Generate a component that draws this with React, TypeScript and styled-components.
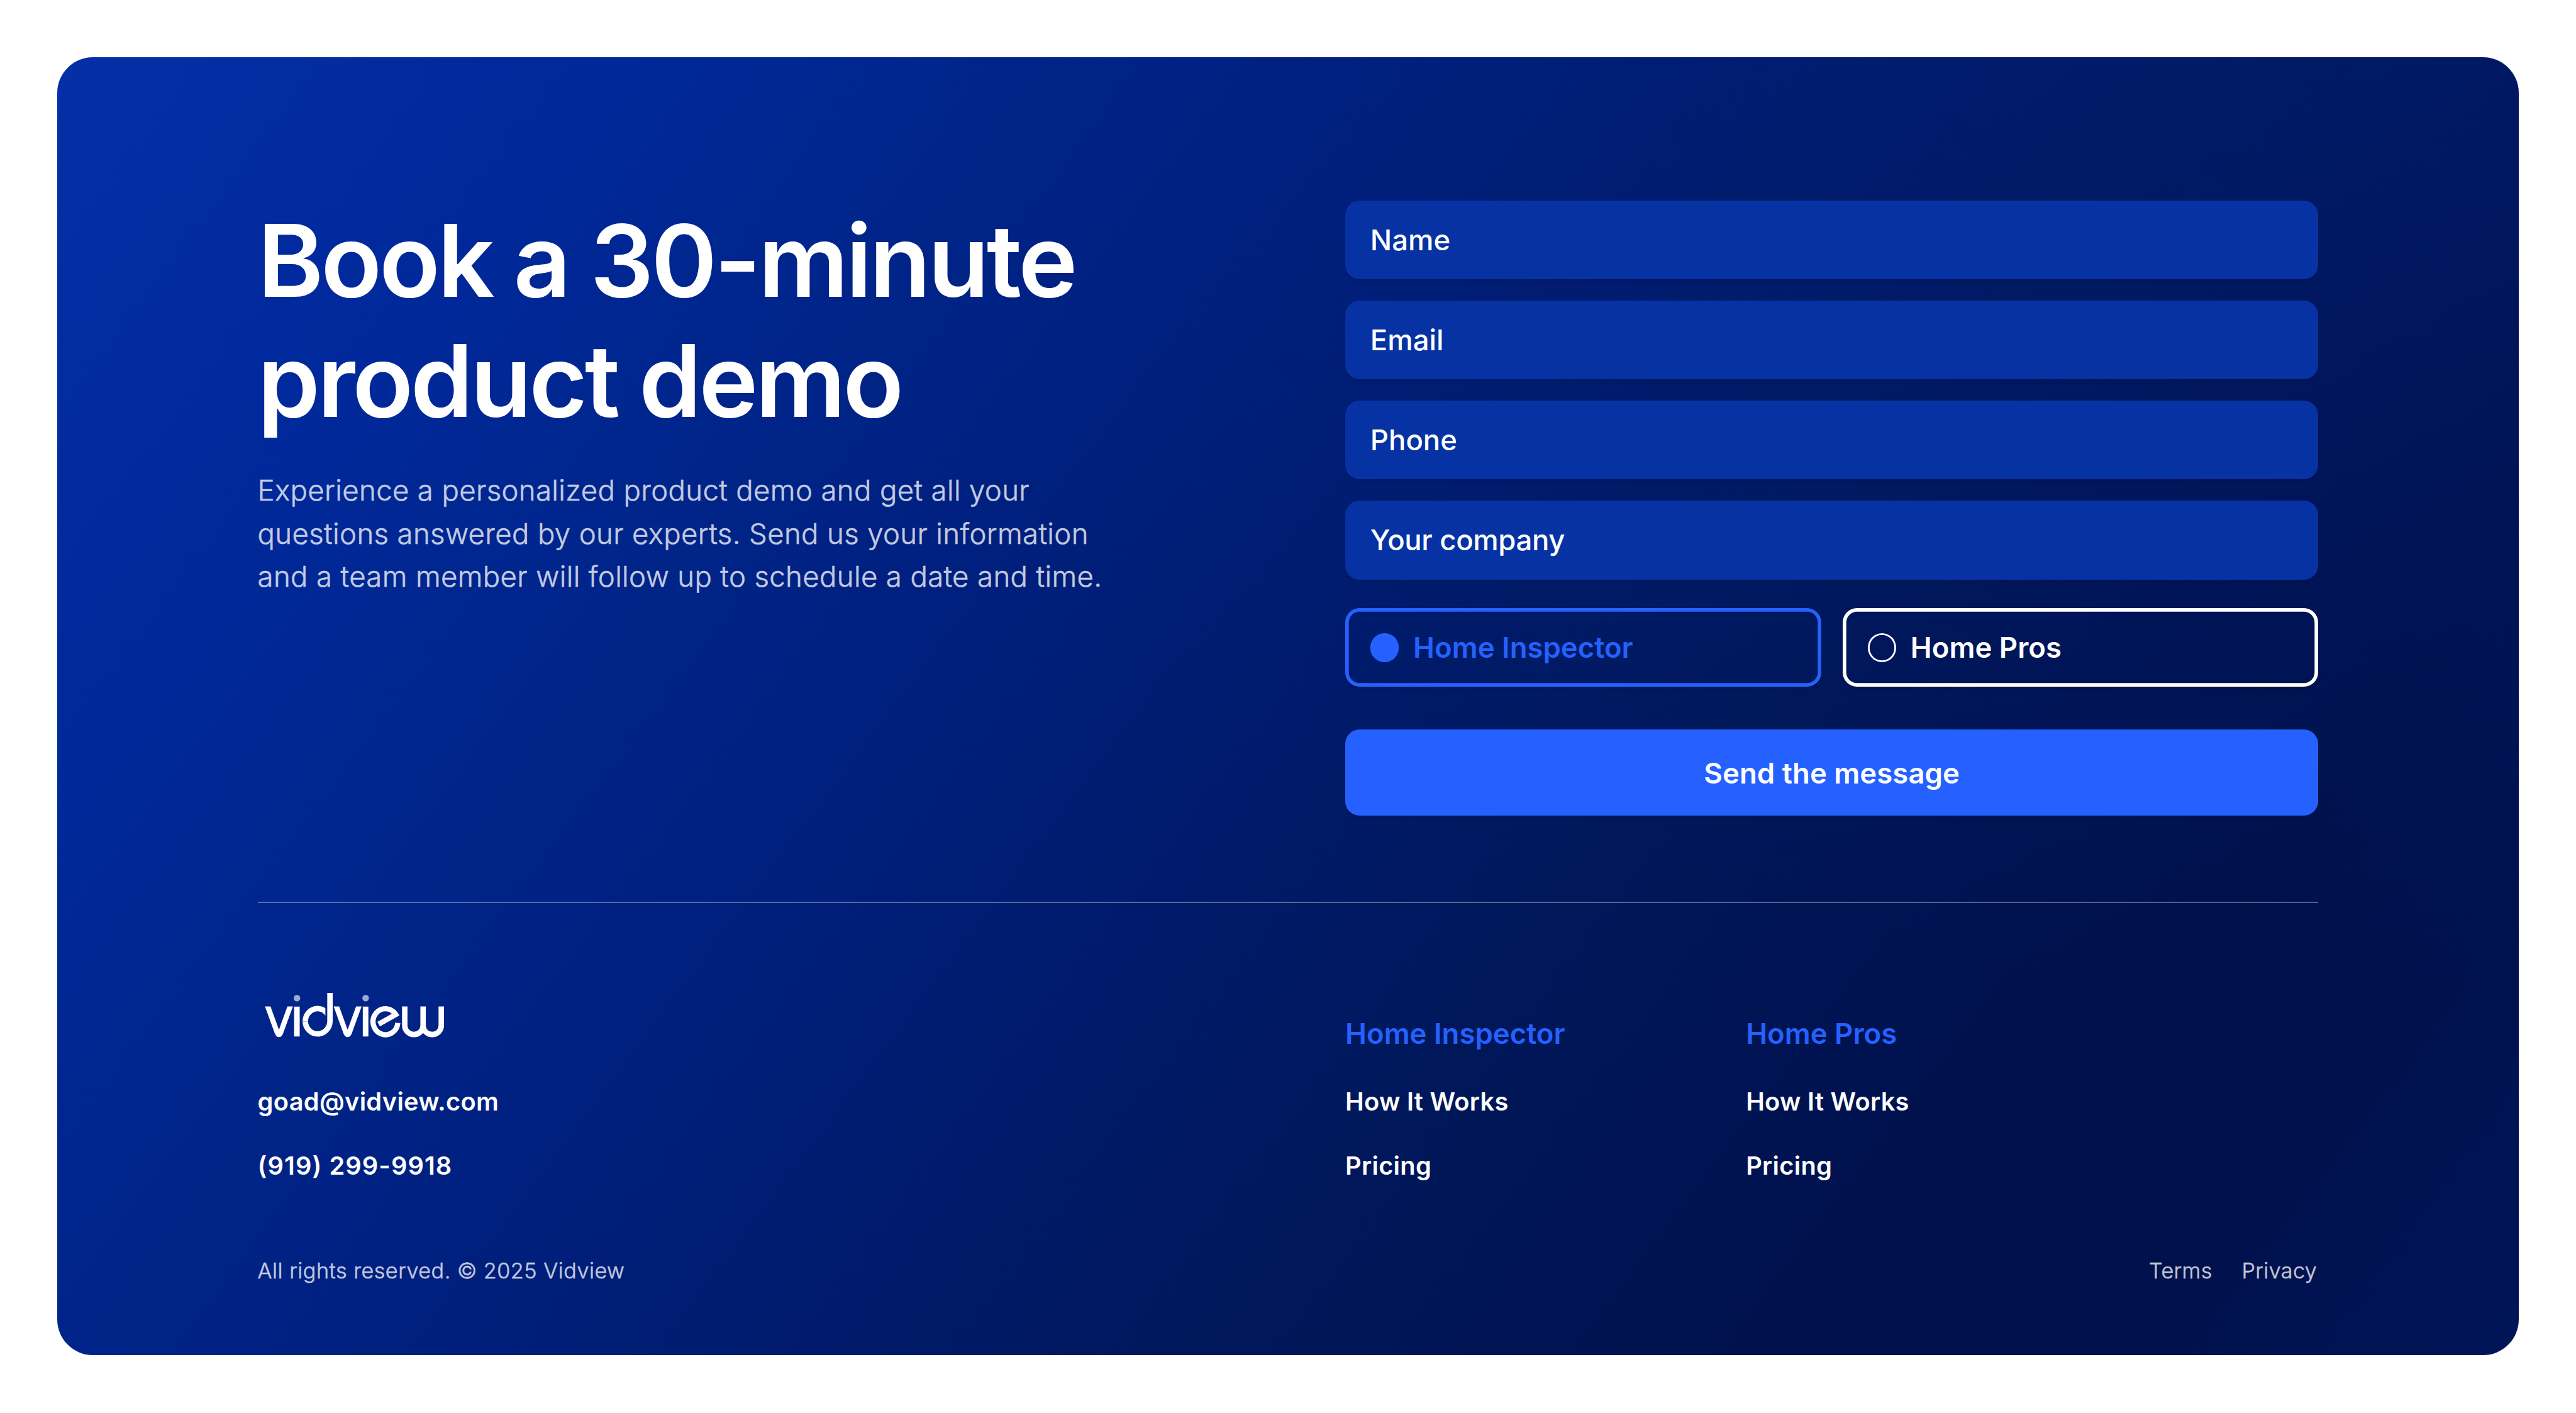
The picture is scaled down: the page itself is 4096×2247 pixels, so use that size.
import React, { useState } from "react";
import styled, { createGlobalStyle, css } from "styled-components";

const u = (n: number) => `${((n * 4096) / 1440).toFixed(3)}px`;

const color = {
  white: "#ffffff",
  line: "rgba(255, 255, 255, 0.33)",
  accent: "#2561ff",
  field: "#0632a4",
};

const GlobalStyle = createGlobalStyle`
  *, *::before, *::after { box-sizing: border-box; }
  html, body { margin: 0; background: #ffffff; }
  body { font-family: Inter, "Liberation Sans", sans-serif; color: ${color.white}; }
  h1, p, ul { margin: 0; padding: 0; }
  ul { list-style: none; }
  a { color: inherit; text-decoration: none; }
`;

const Page = styled.main`
  width: 4096px;
  height: 2247px;
  padding: ${u(32)};
  overflow: hidden;
`;

const Card = styled.section`
  display: flex;
  flex-direction: column;
  height: ${u(725.75)};
  padding: ${u(80)} ${u(112)} 0;
  border-radius: ${u(20)};
  background:
    radial-gradient(ellipse 68% 78% at 96% -5%, rgba(0, 34, 130, 0.38), rgba(0, 34, 130, 0) 100%),
    linear-gradient(
      127deg,
      #052fa6 0%,
      #00299c 14%,
      #002488 29%,
      #002080 37%,
      #001b6c 50%,
      #001759 63%,
      #001352 72%,
      #00104a 82%,
      #00114e 90%,
      #001557 100%
    );
`;

const Booking = styled.div`
  display: grid;
  grid-template-columns: ${u(608)} ${u(544)};
  height: ${u(392)};
`;

const Intro = styled.div`
  display: flex;
  flex-direction: column;
  gap: ${u(16)};
`;

const Title = styled.h1`
  font-size: ${u(56)};
  font-weight: 600;
  line-height: 1.2;
  letter-spacing: -0.0268em;
  word-spacing: -0.009em;
`;

// Secondary copy: a light face, slightly thickened, faded towards the background.
const softText = css`
  color: ${color.white};
  opacity: 0.76;
  font-weight: 300;
  -webkit-text-stroke: 0.5px ${color.white};
`;

const Lead = styled.p`
  ${softText}
  font-size: ${u(16)};
  line-height: ${u(24)};
  letter-spacing: 0.0082em;
  white-space: nowrap;
`;

const Form = styled.form`
  display: flex;
  flex-direction: column;
`;

const Fields = styled.div`
  display: grid;
  gap: ${u(12)};
`;

const drop = `0 ${u(1)} ${u(2)} rgba(0, 0, 0, 0.12)`;

const control = css`
  height: ${u(44)};
  border: 0;
  border-radius: ${u(8)};
  font-family: inherit;
  font-size: ${u(16)};
  line-height: ${u(24)};
  box-shadow: ${drop};
`;

const Field = styled.input<{ $tracking?: number }>`
  ${control}
  width: 100%;
  padding: 0 ${u(14)};
  outline: 0;
  background: ${color.field};
  color: ${color.white};
  font-weight: 500;
  letter-spacing: ${(p) => p.$tracking ?? 0}em;
  &::placeholder {
    color: ${color.white};
    opacity: 1;
  }
`;

const Choices = styled.div`
  display: grid;
  grid-template-columns: 1fr 1fr;
  gap: ${u(12)};
  margin: ${u(16)} 0 ${u(24)};
`;

const Choice = styled.button<{ $on: boolean }>`
  ${control}
  display: flex;
  align-items: center;
  gap: ${u(8)};
  padding: ${u(0.4)} ${u(14)} 0;
  box-shadow: inset 0 0 0 ${u(2)} currentColor, ${drop};
  background: none;
  color: ${(p) => (p.$on ? color.accent : color.white)};
  font-weight: 600;
`;

const Dot = styled.span<{ $on: boolean }>`
  width: ${u(16)};
  height: ${u(16)};
  border-radius: 50%;
  box-shadow: inset 0 0 0 ${u(1)} currentColor;
  background: ${(p) => (p.$on ? "currentColor" : "transparent")};
`;

const Submit = styled.button`
  ${control}
  height: ${u(48)};
  padding: ${u(0.7)} 0 0;
  background: ${color.accent};
  color: ${color.white};
  font-weight: 600;
  letter-spacing: 0.001em;
`;

const Rule = styled.hr`
  flex: none;
  width: 100%;
  height: ${u(1)};
  margin: 0;
  border: 0;
  background: ${color.line};
`;

const Footer = styled.footer`
  display: grid;
  grid-template-columns: ${u(608)} ${u(224)} auto;
  padding-top: ${u(50)};
`;

const Column = styled.div`
  display: flex;
  flex-direction: column;
`;

const Links = styled.ul`
  font-size: ${u(14)};
  font-weight: 600;
  line-height: ${u(36)};
  letter-spacing: 0.007em;
`;

const PhoneLink = styled.a`
  letter-spacing: 0.0265em;
`;

const LogoBox = styled.div`
  height: ${u(42.9)};
`;

const ColumnTitle = styled.div`
  height: ${u(42.9)};
  padding-top: ${u(10.9)};
  color: ${color.accent};
  font-size: ${u(16)};
  font-weight: 600;
  line-height: ${u(24)};
`;

const Legal = styled.div`
  ${softText}
  display: flex;
  justify-content: space-between;
  margin-top: ${u(31.6)};
  font-size: ${u(12)};
  line-height: ${u(18)};
`;

const Copyright = styled.span`
  letter-spacing: 0.0154em;
`;

const LegalLinks = styled.nav`
  display: flex;
  gap: ${u(16.4)};
  padding-right: ${u(0.8)};
  letter-spacing: 0.012em;
`;

const LogoSvg = styled.svg`
  display: block;
  width: ${u(104)};
  height: ${u(25)};
  overflow: visible;
`;

const Logo = () => (
  <LogoSvg viewBox="48 120 1248 300" fill="none" stroke="#fff" strokeWidth="36.5" role="img" aria-label="vidview">
    <defs>
      <clipPath id="belowTop"><rect x="80" y="211" width="720" height="220" /></clipPath>
      <clipPath id="bowlTop"><rect x="340" y="200" width="161" height="112.5" /></clipPath>
      <g id="wedge">
        <path d="M107.2 191 L178 386 Q189.5 413 201 386 L271.8 191" strokeWidth="34.8" />
        <path d="M310 211 V412.5" strokeWidth="37.5" />
      </g>
    </defs>
    <g clipPath="url(#belowTop)">
      <use href="#wedge" />
      <use href="#wedge" x="460.7" />
    </g>
    <g fill="#fff" fillOpacity="0.61" stroke="none">
      <circle cx="310.5" cy="155" r="22" />
      <circle cx="771" cy="155" r="22" />
    </g>
    <path d="M531.8 120 V312 A83 87.3 0 0 1 366 312" />
    <path d="M366 312.5 A83 87.3 0 0 1 532 312" clipPath="url(#bowlTop)" />
    <path d="M858.5 329.5 L973.5 265 A83.5 87.3 0 1 0 987 321" strokeWidth="35" strokeMiterlimit="6" />
    <path d="M1033.5 211 V338 A61.5 61.2 0 0 0 1156.5 338 V211 M1156.5 338 A61 61.2 0 0 0 1278.5 338 V211" />
  </LogoSvg>
);

const fields = [
  { label: "Name" },
  { label: "Email" },
  { label: "Phone" },
  { label: "Your company", tracking: -0.008 },
];
const roles = ["Home Inspector", "Home Pros"];

export default function App() {
  const [role, setRole] = useState(roles[0]);
  return (
    <>
      <GlobalStyle />
      <Page>
        <Card>
          <Booking>
            <Intro>
              <Title>
                Book a 30-minute
                <br />
                product demo
              </Title>
              <Lead>
                Experience a personalized product demo and get all your
                <br />
                questions answered by our experts. Send us your information
                <br />
                and a team member will follow up to schedule a date and time.
              </Lead>
            </Intro>
            <Form onSubmit={(e) => e.preventDefault()}>
              <Fields>
                {fields.map((f) => (
                  <Field key={f.label} placeholder={f.label} aria-label={f.label} $tracking={f.tracking} />
                ))}
              </Fields>
              <Choices>
                {roles.map((r) => (
                  <Choice key={r} type="button" $on={r === role} onClick={() => setRole(r)}>
                    <Dot $on={r === role} />
                    {r}
                  </Choice>
                ))}
              </Choices>
              <Submit>Send the message</Submit>
            </Form>
          </Booking>
          <Rule />
          <Footer>
            <Column>
              <LogoBox>
                <Logo />
              </LogoBox>
              <Links>
                <li><a href="#email">goad@vidview.com</a></li>
                <li><PhoneLink href="#phone">(919) 299-9918</PhoneLink></li>
              </Links>
            </Column>
            {roles.map((r) => (
              <Column key={r}>
                <ColumnTitle>{r}</ColumnTitle>
                <Links>
                  <li><a href="#how">How It Works</a></li>
                  <li><a href="#pricing">Pricing</a></li>
                </Links>
              </Column>
            ))}
          </Footer>
          <Legal>
            <Copyright>All rights reserved. © 2025 Vidview</Copyright>
            <LegalLinks>
              <a href="#terms">Terms</a>
              <a href="#privacy">Privacy</a>
            </LegalLinks>
          </Legal>
        </Card>
      </Page>
    </>
  );
}
